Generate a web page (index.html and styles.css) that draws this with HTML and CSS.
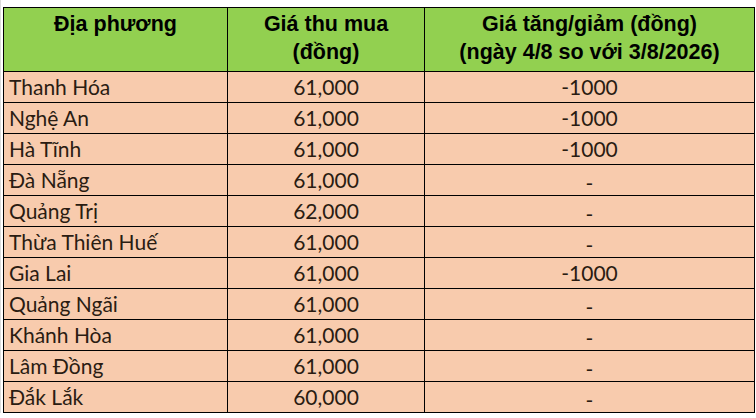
FILE: index.html
```html
<!DOCTYPE html>
<html lang="vi">
<head>
<meta charset="utf-8">
<title>Giá thu mua</title>
<link rel="stylesheet" href="styles.css">
</head>
<body>
<div class="sheet">
<table class="price-table">
  <colgroup>
    <col class="c1"><col class="c2"><col class="c3">
  </colgroup>
  <thead>
    <tr class="head-row">
      <th>Địa phương</th>
      <th>Giá thu mua<br>(đồng)</th>
      <th>Giá tăng/giảm (đồng)<br>(ngày 4/8 so với 3/8/2026)</th>
    </tr>
  </thead>
  <tbody>
    <tr><td class="name">Thanh Hóa</td><td class="num">61,000</td><td class="chg">-1000</td></tr>
    <tr><td class="name">Nghệ An</td><td class="num">61,000</td><td class="chg">-1000</td></tr>
    <tr><td class="name">Hà Tĩnh</td><td class="num">61,000</td><td class="chg">-1000</td></tr>
    <tr><td class="name">Đà Nẵng</td><td class="num">61,000</td><td class="chg"><span class="dash">-</span></td></tr>
    <tr><td class="name">Quảng Trị</td><td class="num">62,000</td><td class="chg"><span class="dash">-</span></td></tr>
    <tr><td class="name">Thừa Thiên Huế</td><td class="num">61,000</td><td class="chg"><span class="dash">-</span></td></tr>
    <tr><td class="name">Gia Lai</td><td class="num">61,000</td><td class="chg">-1000</td></tr>
    <tr><td class="name">Quảng Ngãi</td><td class="num">61,000</td><td class="chg"><span class="dash">-</span></td></tr>
    <tr><td class="name">Khánh Hòa</td><td class="num">61,000</td><td class="chg"><span class="dash">-</span></td></tr>
    <tr><td class="name">Lâm Đồng</td><td class="num">61,000</td><td class="chg"><span class="dash">-</span></td></tr>
    <tr><td class="name">Đắk Lắk</td><td class="num">60,000</td><td class="chg"><span class="dash">-</span></td></tr>
  </tbody>
</table>
</div>
</body>
</html>
```
FILE: styles.css
```css
html, body {
  margin: 0;
  padding: 0;
  background: #ffffff;
}

.sheet {
  width: 756px;
  box-sizing: border-box;
  padding: 7px 0 0 2px;
  border-left: 1px solid #dcdcdc;
}

.price-table {
  border-collapse: collapse;
  table-layout: fixed;
  width: 751px;
}

.c1 { width: 224px; }
.c2 { width: 197px; }
.c3 { width: 330px; }

.price-table th,
.price-table td {
  border: 1px solid #000;
  padding: 0;
}

.head-row {
  height: 64px;
}

.price-table tbody tr {
  height: 31px;
}

.price-table th {
  background: #92d050;
  vertical-align: top;
  font-family: "Liberation Sans", Arial, sans-serif;
  font-weight: bold;
  font-size: 21.5px;
  line-height: 28px;
  color: #000;
  text-align: center;
  padding-top: 2px;
}

.price-table td {
  background: #f8cbad;
  font-family: Lato, "Open Sans", sans-serif;
  font-size: 21px;
  line-height: 28px;
  color: #2a1c12;
  vertical-align: middle;
}

.price-table td.name {
  text-align: left;
  padding-left: 5px;
}

.price-table td.num,
.price-table td.chg {
  text-align: center;
}

.dash {
  position: relative;
  top: 3px;
}
```
